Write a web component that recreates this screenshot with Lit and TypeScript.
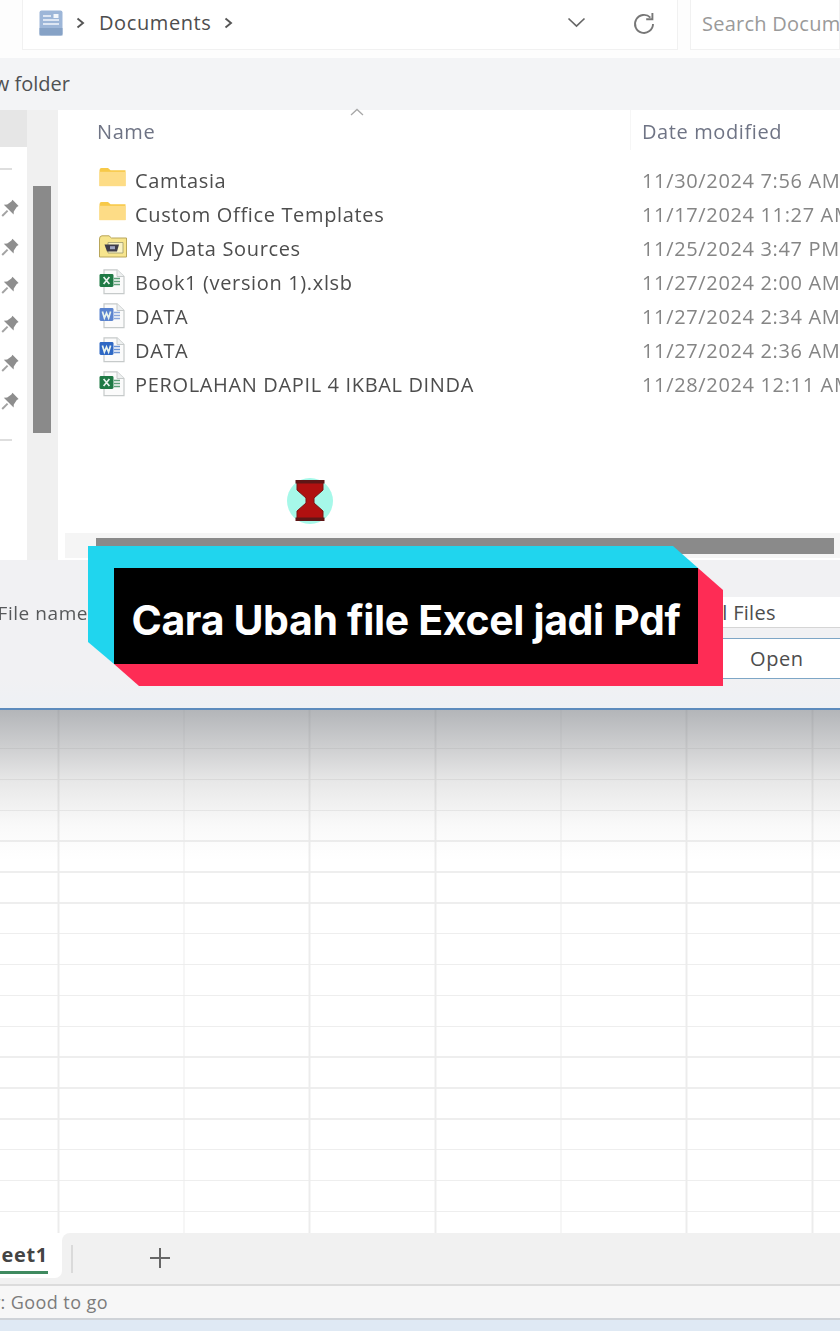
import { LitElement, html, css, svg } from "lit";
import { customElement } from "lit/decorators.js";

type Kind = "folder" | "data" | "xl" | "word" | "wordalt";
const rows: { k: Kind; n: string; d: string }[] = [
  { k: "folder", n: "Camtasia", d: "11/30/2024 7:56 AM" },
  { k: "folder", n: "Custom Office Templates", d: "11/17/2024 11:27 AM" },
  { k: "data", n: "My Data Sources", d: "11/25/2024 3:47 PM" },
  { k: "xl", n: "Book1 (version 1).xlsb", d: "11/27/2024 2:00 AM" },
  { k: "wordalt", n: "DATA", d: "11/27/2024 2:34 AM" },
  { k: "word", n: "DATA", d: "11/27/2024 2:36 AM" },
  { k: "xl", n: "PEROLAHAN DAPIL 4 IKBAL DINDA", d: "11/28/2024 12:11 AM" },
];

const doc = (color: string, letter: string) => svg`
  <path d="M5 .8H18L25 7.5V24.6H5Z" fill="#fbfbfb" stroke="#c6caca" stroke-width="1.2"/>
  <path d="M18 .8V7.5H25" fill="#eef0f0" stroke="#c6caca" stroke-width="1"/>
  <path d="M15 9.5H21M15 12.5H21M15 15.5H21" stroke="${color}" stroke-opacity=".7" stroke-width="1.7"/>
  <rect x=".5" y="5" width="14" height="13" rx="1.4" fill="${color}"/>
  <path d="${letter}" fill="none" stroke="#e9f3ee" stroke-width="1.7"/>`;

function icon(k: Kind) {
  let body;
  if (k === "folder")
    body = svg`<path d="M.5 3.2Q.5 1 2.5 1H9L11.5 3.2H26.5V19H.5Z" fill="#f7c948"/>
      <path d="M.5 4.8H26.5V19.2H.5Z" fill="#fddc86"/>`;
  else if (k === "data")
    body = svg`<path d="M.5 4Q.5 .8 3 .8H10L12.5 3H27.5V22H.5Z" fill="#f7e58d" stroke="#b9a65a" stroke-width="1"/>
      <path d="M9 7.5H24V18H9Z" fill="#f9f2c4" stroke="#9d9a70" stroke-width=".8"/>
      <path d="M5.5 9.5H20L18 16.5H8Z" fill="#3e3c4a"/>
      <rect x="11" y="11.2" width="5" height="3" fill="#9ea4c0"/>`;
  else if (k === "xl") body = doc("#1f7a45", "M4.6 8L10.4 15M10.4 8L4.6 15");
  else if (k === "word") body = doc("#2f68c4", "M3.4 8.4L5.4 15L7.5 10L9.6 15L11.6 8.4");
  else body = doc("#5a83cf", "M3.4 8.4L5.4 15L7.5 10L9.6 15L11.6 8.4");
  return html`<svg class="ficon" viewBox="0 0 28 26" width="28" height="26">${body}</svg>`;
}

const pin = html`<svg class="pin" viewBox="0 0 20 20" width="20" height="20">
  <path d="M12.5 1.8L18.6 7.9L16.8 8.9L13.8 13.4L13.6 16.6L3.8 6.8L7.2 6.5L11.4 3.4Z" fill="#8e8e8e"/>
  <path d="M7.6 12.6L2.2 18" stroke="#a3a3a3" stroke-width="2"/></svg>`;

@customElement("app-root")
export class AppRoot extends LitElement {
  static styles = css`
    :host { display: block; width: 840px; height: 1331px; position: relative; overflow: hidden; background: #fff;
      font-family: "Open Sans", "Noto Sans", sans-serif; }
    .shot { width: 840px; height: 1331px; display: flex; flex-direction: column; filter: blur(0.7px); }

    .nav { height: 58px; flex: none; display: flex; gap: 12px; padding-left: 22px; background: #fdfdfd; box-sizing: border-box; }
    .addr, .search { height: 50px; box-sizing: border-box; border: 1px solid #f1f1f1; border-top: 0; background: #fff; display: flex; align-items: center; color: #4d4d4d; font-size: 20px; letter-spacing: .6px; }
    .addr { width: 656px; padding: 0 0 4px 16px; flex: none; }
    .search { flex: 1; padding: 0 0 3px 11px; color: #9a9a9a; white-space: nowrap; overflow: hidden; letter-spacing: .25px; }
    .crumb { margin: 0 14px 0 13px; }
    .spacer { flex: 1; }
    .chev { margin-right: 46px; }
    .refresh { margin-right: 21px; }

    .tools { height: 52px; flex: none; background: #f3f4f6; display: flex; align-items: center; }
    .clip-r { display: flex; justify-content: flex-end; overflow: hidden; white-space: nowrap; flex: none; }
    .tools .clip-r { width: 70px; font-size: 20px; color: #4f5153; padding-bottom: 1px; }

    .body { height: 450px; flex: none; display: flex; background: #fff; }
    .side { width: 27px; flex: none; display: flex; flex-direction: column; overflow: hidden; }
    .sel { height: 37px; background: #e6e6e6; flex: none; }
    .rule { height: 2px; width: 12px; background: #dedede; flex: none; }
    .pins { display: flex; flex-direction: column; gap: 18.7px; padding: 28px 0 28px; margin-left: 0; }
    .pin { display: block; }
    .track { width: 31px; flex: none; background: #f0f0f0; padding: 76px 7px 0 6px; box-sizing: border-box; }
    .thumb { height: 247px; background: #8a8a8a; }
    .main { flex: 1; display: flex; flex-direction: column; min-width: 0; }
    .list { height: 423px; flex: none; position: relative; padding-left: 39px; }
    .head { height: 42px; display: grid; grid-template-columns: 545px 1fr; color: #6f7485; font-size: 20px; letter-spacing: .6px; align-items: center; position: relative; }
    .head span:last-child { height: 42px; display: flex; align-items: center; }
    .divider { position: absolute; left: 533px; top: 0; width: 1px; height: 40px; background: #f6f6f6; }
    .sort { position: absolute; left: 253px; top: -2px; }
    .row { height: 34px; display: grid; grid-template-columns: 38px 507px 1fr; align-items: center; white-space: nowrap; font-size: 20px; letter-spacing: .65px; color: #4d4d4d; }
    .rows { padding-top: 11px; }
    .row .date { color: #858585; }
    .ficon { display: block; margin-left: 2px; }
    .hbar { margin-left: 7px; height: 25px; background: #f5f5f5; padding: 5px 6px 0 31px; box-sizing: border-box; flex: none; }
    .hthumb { height: 16px; background: #8a8a8a; }

    .foot { height: 148px; flex: none; background: linear-gradient(#f1f1f3 80%, #eef1f5); display: flex; flex-direction: column; align-items: stretch; position: relative; }
    .f1 { display: flex; margin-top: 37px; height: 31px; }
    .f1 .clip-r { width: 88px; font-size: 19px; color: #56585a; align-items: center; letter-spacing: .55px; }
    .fname { flex: 1; }
    .type { width: 136px; background: #fff; border-bottom: 1px solid #d5d5d5; font-size: 20px; color: #4d4d4d; display: flex; align-items: center; box-sizing: border-box; white-space: nowrap; letter-spacing: .3px; }
    .open { align-self: flex-end; width: 117px; height: 41px; margin-top: 10px; background: #fff; box-sizing: border-box; border-top: 1px solid #7ea6c6; border-bottom: 1px solid #7ea6c6; font-size: 20px; color: #4d4d4d; display: flex; align-items: center; padding-left: 27px; letter-spacing: .6px; }
    .edge { height: 2px; flex: none; background: #5c8bbd; }

    .grid { height: 523px; flex: none; background-color: #fff;
      background-image:
        linear-gradient(rgba(120,124,130,.56) 0, rgba(130,132,136,.4) 36px, rgba(150,150,150,.22) 72px, rgba(170,170,170,.07) 115px, rgba(255,255,255,0) 150px),
        repeating-linear-gradient(90deg, #ececec 0 1.5px, transparent 1.5px 125.7px),
        linear-gradient(#fff 0 38px, transparent 38px),
        repeating-linear-gradient(180deg, #eeeeee 0 1.5px, transparent 1.5px 30.85px);
      background-position: 0 0, 57.5px 0, 0 0, 0 7px;
      background-repeat: no-repeat, repeat, no-repeat, repeat;
    }
    .tabs { height: 53px; flex: none; background: #fff; display: flex; box-sizing: border-box; align-items: stretch; }
    .tabcol { width: 62px; flex: none; background: #f1f1f1; border-bottom: 2px solid #dcdcdc; box-sizing: border-box; }
    .tab { height: 45px; background: #fff; border-bottom-right-radius: 7px; display: flex; flex-direction: column; align-items: flex-end; box-sizing: border-box; overflow: hidden; }
    .tab .t { width: 48px; display: flex; justify-content: flex-end; overflow: hidden; font-weight: 700; font-size: 20px; letter-spacing: .7px; color: #444; margin: 8px 14px 0 0; white-space: nowrap; }
    .tab .u { width: 48px; height: 3px; background: #3f8a5f; margin: 3px 14px 0 0; flex: none; }
    .rest { flex: 1; background: #f1f1f1; border-top-left-radius: 8px; border-bottom: 2px solid #dcdcdc; display: flex; align-items: flex-start; box-sizing: border-box; }
    .sep { width: 2px; height: 28px; background: #dadada; margin: 12px 0 0 9px; }
    .plus { margin: 14px 0 0 76px; }
    .status { height: 34px; flex: none; background: #f7f7f7; display: flex; align-items: center; border-bottom: 2px solid #cfd3d8; box-sizing: border-box; }
    .status .clip-r { width: 108px; font-size: 18px; color: #7c7c7c; letter-spacing: .42px; }
    .tail { height: 11px; flex: none; background: #dfe9f4; }

    .hour { position: absolute; left: 287px; top: 478px; width: 46px; height: 46px; border-radius: 50%; background: #a6f8e9; display: flex; align-items: center; justify-content: center; filter: blur(.5px); }
    .cap { position: absolute; left: 88px; top: 546px; width: 635px; height: 140px; }
    .cy { position: absolute; inset: 0; background: #20d5ee; clip-path: polygon(0 0, 585px 0, 610px 22px, 26px 118px, 0 96px); }
    .pk { position: absolute; inset: 0; background: #fe2c55; clip-path: polygon(610px 22px, 635px 44px, 635px 140px, 51px 140px, 26px 118px); }
    .bk { position: absolute; left: 26px; top: 22px; width: 584px; height: 96px; background: #000; color: #fff; font-family: Inter, "Liberation Sans", sans-serif; font-weight: 700; font-size: 41px; letter-spacing: -.35px; display: flex; align-items: center; justify-content: center; white-space: nowrap; box-sizing: border-box; padding-top: 8px; }
  `;

  render() {
    return html`
      <div class="shot">
        <div class="nav">
          <div class="addr">
            <svg width="24" height="26" viewBox="0 0 24 26"><rect x=".5" y=".5" width="23" height="25" rx="2" fill="#9db6d8"/><rect x=".5" y="18" width="23" height="7.5" fill="#86a2c6"/><path d="M4 6H12M4 10H20M4 14H20" stroke="#f2f6fb" stroke-width="1.6"/><rect x="14.5" y="4" width="5" height="4" fill="#f2f6fb"/></svg>
            <svg class="crumb" width="9" height="12" viewBox="0 0 9 12"><path d="M1.5 1.5L7 6L1.5 10.5" fill="none" stroke="#555" stroke-width="1.9"/></svg>
            <span>Documents</span>
            <svg style="margin-left:13px" width="9" height="12" viewBox="0 0 9 12"><path d="M1.5 1.5L7 6L1.5 10.5" fill="none" stroke="#555" stroke-width="1.9"/></svg>
            <span class="spacer"></span>
            <svg class="chev" width="19" height="11" viewBox="0 0 19 11"><path d="M1.5 1.5L9.5 9L17.5 1.5" fill="none" stroke="#666" stroke-width="1.7"/></svg>
            <svg class="refresh" width="24" height="24" viewBox="0 0 24 24"><path d="M18.4 6.6A9 9 0 1 0 21 13" fill="none" stroke="#777" stroke-width="1.9"/><path d="M20.4 2V8.2H14.2" fill="none" stroke="#777" stroke-width="1.9"/></svg>
          </div>
          <div class="search">Search Documents</div>
        </div>
        <div class="tools"><div class="clip-r">New folder</div></div>
        <div class="body">
          <div class="side">
            <div class="sel"></div>
            <div class="rule" style="margin-top:21px"></div>
            <div class="pins">${[0, 1, 2, 3, 4, 5].map(() => pin)}</div>
            <div class="rule"></div>
          </div>
          <div class="track"><div class="thumb"></div></div>
          <div class="main">
            <div class="list">
              <div class="head">
                <span>Name</span><span>Date modified</span>
                <svg class="sort" width="14" height="8" viewBox="0 0 14 8"><path d="M1 7L7 1.5L13 7" fill="none" stroke="#a8a8a8" stroke-width="1.3"/></svg>
                <i class="divider"></i>
              </div>
              <div class="rows">
                ${rows.map((r) => html`<div class="row">${icon(r.k)}<span>${r.n}</span><span class="date">${r.d}</span></div>`)}
              </div>
            </div>
            <div class="hbar"><div class="hthumb"></div></div>
          </div>
        </div>
        <div class="foot">
          <div class="f1">
            <div class="clip-r">File name</div>
            <div class="fname"></div>
            <div class="type">All Files</div>
          </div>
          <div class="open">Open</div>
        </div>
        <div class="edge"></div>
        <div class="grid"></div>
        <div class="tabs">
          <div class="tabcol"><div class="tab"><div class="t">Sheet1</div><div class="u"></div></div></div>
          <div class="rest">
            <div class="sep"></div>
            <svg class="plus" width="22" height="22" viewBox="0 0 22 22"><path d="M11 1V21M1 11H21" stroke="#666" stroke-width="2"/></svg>
          </div>
        </div>
        <div class="status"><div class="clip-r">Accessibility: Good to go</div></div>
        <div class="tail"></div>
      </div>
      <div class="hour">
        <svg width="30" height="42" viewBox="0 0 30 42">
          <path d="M2 2H28V10L19 18V23L28 31V39H2V31L11 23V18L2 10Z" fill="#b01010" stroke="#7a1212" stroke-width="1"/>
          <rect x=".5" y="0" width="29" height="3.5" fill="#5e1616"/><rect x=".5" y="37.5" width="29" height="3.5" fill="#5e1616"/>
        </svg>
      </div>
      <div class="cap">
        <div class="cy"></div><div class="pk"></div>
        <div class="bk">Cara Ubah file Excel jadi Pdf</div>
      </div>
    `;
  }
}
